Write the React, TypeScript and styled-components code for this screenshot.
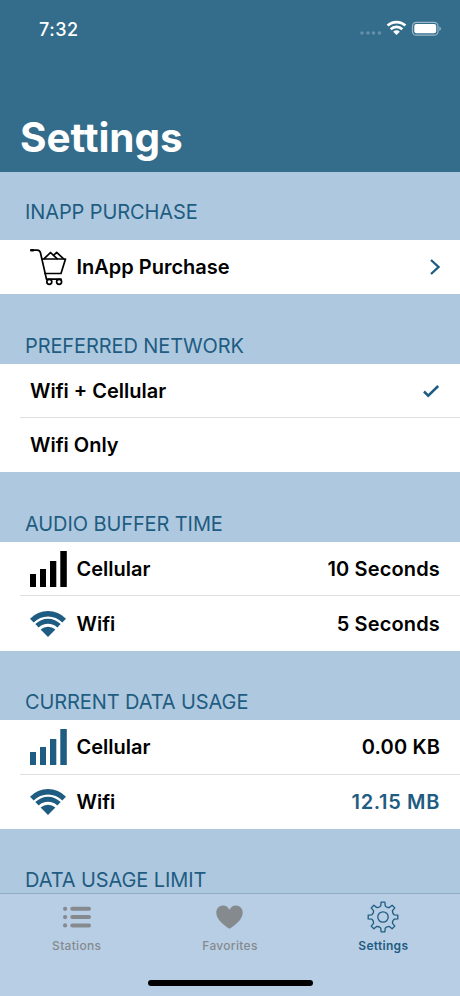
import React from 'react';
import styled, { createGlobalStyle } from 'styled-components';

const ink = '#1f5c82';

const GlobalStyle = createGlobalStyle`
  * { box-sizing: border-box; }
  html, body { margin: 0; padding: 0; background: #aec9df; overflow: hidden; }
  svg { display: block; flex: none; }
`;

const Screen = styled.div`
  width: 460px;
  height: 996px;
  overflow: hidden;
  display: flex;
  flex-direction: column;
  background: #aec9df;
  color: #000;
  font-family: Inter, "Liberation Sans", sans-serif;
`;

const Header = styled.header`
  height: 172px;
  flex: none;
  display: flex;
  flex-direction: column;
  justify-content: space-between;
  background: #346c8b;
  color: #fff;
`;

const StatusBar = styled.div`
  height: 58px;
  padding: 0 19px 0 39px;
  display: flex;
  align-items: center;
  justify-content: space-between;
`;

const Clock = styled.span`
  font-size: 18px;
  font-weight: 500;
  letter-spacing: 0.5px;
`;

const Title = styled.h1`
  margin: 0;
  padding: 0 20px 9px;
  font-size: 40.5px;
  line-height: 50px;
  font-weight: 700;
  letter-spacing: -0.1px;
`;

const Content = styled.main`
  height: 721px;
  flex: none;
  overflow: hidden;
`;

const SectionTitle = styled.h2<{ $first?: boolean }>`
  margin: 0;
  height: ${p => (p.$first ? 68 : 69.6)}px;
  padding: ${p => (p.$first ? 27 : 38.5)}px 25px 0;
  font-size: 20px;
  line-height: 26px;
  font-weight: 400;
  letter-spacing: -0.1px;
  color: ${ink};
`;

const Row = styled.div`
  height: 54.3px;
  padding: 0 20px 0 30px;
  display: flex;
  align-items: center;
  background: #fff;
  font-size: 20px;
  font-weight: 600;
  letter-spacing: 0;
`;

const Divider = styled.div`
  height: 1px;
  margin: -1px 0 0 20px;
  position: relative;
  background: #dfdfe1;
`;

const IconSlot = styled.span`
  width: 46.5px;
  flex: none;
`;

const Label = styled.span`
  flex: 1;
`;

const Value = styled.span<{ $accent?: boolean }>`
  color: ${p => (p.$accent ? ink : '#000')};
  letter-spacing: ${p => (p.$accent ? 0.65 : 0.15)}px;
`;

const TabBar = styled.nav`
  height: 103px;
  flex: none;
  border-top: 1px solid #8fadc3;
  background: #b8cee4;
  display: flex;
  flex-direction: column;
  justify-content: space-between;
  align-items: center;
`;

const Tabs = styled.div`
  width: 100%;
  display: grid;
  grid-template-columns: repeat(3, 1fr);
`;

const Tab = styled.div<{ $active?: boolean }>`
  display: flex;
  flex-direction: column;
  align-items: center;
  padding-top: 7px;
  color: ${p => (p.$active ? ink : '#858a8e')};
  font-size: 12px;
  line-height: 16px;
  font-weight: ${p => (p.$active ? 600 : 500)};
  letter-spacing: 0.3px;
`;

const TabIcon = styled.span`
  height: 37px;
`;

const HomeIndicator = styled.div`
  width: 165px;
  height: 6px;
  margin-bottom: 10px;
  border-radius: 3px;
  background: #000;
`;

const StatusIcons = () => (
  <svg width="82" height="20" viewBox="0 0 82 20">
    <g fill="#6590a8">
      <circle cx="3" cy="14" r="1.8" />
      <circle cx="9" cy="14" r="1.8" />
      <circle cx="14.5" cy="14" r="1.8" />
      <circle cx="20.5" cy="14" r="1.8" />
    </g>
    <g fill="none" stroke="#fff" strokeWidth="2.7">
      <path d="M28.6 6.6a13 13 0 0 1 17.8 0" />
      <path d="M31.7 10.3a8.3 8.3 0 0 1 11.6 0" />
    </g>
    <path d="M34.2 12.7a4.6 4.6 0 0 1 6.6 0L37.5 16z" fill="#fff" />
    <rect x="53.5" y="3.3" width="25.5" height="12.8" rx="3.7" fill="none" stroke="#9ab7c7" strokeWidth="1.2" />
    <rect x="55.3" y="5.1" width="21.9" height="9.2" rx="2" fill="#fff" />
    <path d="M80.4 7.5c2 .8 2 3.6 0 4.4z" fill="#9ab7c7" />
  </svg>
);

const CartIcon = () => (
  <svg width="38" height="38" viewBox="0 0 38 38" fill="none" stroke="#000" strokeWidth="1.7" strokeLinecap="round" strokeLinejoin="round">
    <path d="M1.2 2.2H6.5q3 -.4 3.9 2.3L16.5 31.2H31" />
    <path d="M1.2 2.2H3" strokeWidth="2.4" />
    <path d="M12.3 11H35.5L31 25.5H15.2" />
    <path d="M14.2 10.7L20.5 4.5l6.5 6.2M23.5 7.3L26.7 4.4 33.4 10.7" />
    <circle cx="19.3" cy="33.8" r="2.5" />
    <circle cx="29.1" cy="33.8" r="2.5" />
  </svg>
);

const SignalIcon = ({ color }: { color: string }) => (
  <svg width="38" height="36" viewBox="0 0 38 36" fill={color}>
    <path d="M0 23h6v13H0zM10 18h6v18h-6zM20 10h6.3v26H20zM30.3 0h6.5v36h-6.5z" />
  </svg>
);

const WifiIcon = () => (
  <svg width="37" height="28" viewBox="0 0 37 28" fill={ink}>
    <path d="M0 8.7A25 25 0 0 1 36 8.7L32.3 12.5A20 20 0 0 0 3.7 12.5z" />
    <path d="M5.3 14.1A18 18 0 0 1 30.7 14.1L27.3 17.5A13.5 13.5 0 0 0 8.7 17.5z" />
    <path d="M10.6 19.4A11.5 11.5 0 0 1 25.4 19.4L18 27z" />
  </svg>
);

const ListIcon = () => (
  <svg width="28" height="31" viewBox="0 0 28 31" fill="currentColor">
    {[7.8, 16.1, 24.4].map(y => (
      <g key={y}>
        <circle cx="2.1" cy={y} r="2.1" />
        <rect x="7.3" y={y - 2} width="20.7" height="4" rx="2" />
      </g>
    ))}
  </svg>
);

const HeartIcon = () => (
  <svg width="27" height="31" viewBox="0 0 27 31" fill="currentColor">
    <path d="M13.5 27.7C9.5 25.3.3 19.1.3 11.7.3 7.5 3.3 4.6 7 4.6c2.900 0 5.200 1.500 6.500 4.200 1.300-2.700 3.600-4.200 6.500-4.200 3.700 0 6.700 2.900 6.700 7.100 0 7.400-9.200 13.600-13.200 16z" />
  </svg>
);

const rotate = (x: number, y: number, turn: number) => {
  const a = (turn * Math.PI) / 4;
  return `${(x * Math.cos(a) - y * Math.sin(a)).toFixed(2)} ${(x * Math.sin(a) + y * Math.cos(a)).toFixed(2)}`;
};

const gearPath =
  Array.from({ length: 8 }, (_, i) => {
    const p = (x: number, y: number) => rotate(x, y, i);
    return `${i ? 'L' : 'M'}${p(-3.2, -10.3)}L${p(-2.2, -11.2)}L${p(-1.9, -14.8)}L${p(1.9, -14.8)}L${p(2.2, -11.2)}L${p(3.2, -10.3)}Q${p(3.9, -9.8)} ${p(5, -9.5)}`;
  }).join('') + 'Z';

const GearIcon = () => (
  <svg width="32" height="32" viewBox="-16 -16 32 32" fill="none" stroke="currentColor" strokeWidth="1.3" strokeLinejoin="round">
    <path d={gearPath} />
    <circle r="5.2" />
  </svg>
);

const Chevron = () => (
  <svg width="10" height="16" viewBox="0 0 10 16" fill="none" stroke={ink} strokeWidth="2.3">
    <path d="M1 1l7.5 7L1 15" />
  </svg>
);

const Check = () => (
  <svg width="17" height="14" viewBox="0 0 17 14" fill="none" stroke={ink} strokeWidth="2.5">
    <path d="M1 7.5l4.2 4.2L15.2 2" />
  </svg>
);

export default function App() {
  return (
    <>
      <GlobalStyle />
      <Screen>
        <Header>
          <StatusBar>
            <Clock>7:32</Clock>
            <StatusIcons />
          </StatusBar>
          <Title>Settings</Title>
        </Header>
        <Content>
          <SectionTitle $first>INAPP PURCHASE</SectionTitle>
          <Row>
            <IconSlot><CartIcon /></IconSlot>
            <Label>InApp Purchase</Label>
            <Chevron />
          </Row>
          <SectionTitle>PREFERRED NETWORK</SectionTitle>
          <Row>
            <Label>Wifi + Cellular</Label>
            <Check />
          </Row>
          <Divider />
          <Row>
            <Label>Wifi Only</Label>
          </Row>
          <SectionTitle>AUDIO BUFFER TIME</SectionTitle>
          <Row>
            <IconSlot><SignalIcon color="#000" /></IconSlot>
            <Label>Cellular</Label>
            <Value>10 Seconds</Value>
          </Row>
          <Divider />
          <Row>
            <IconSlot><WifiIcon /></IconSlot>
            <Label>Wifi</Label>
            <Value>5 Seconds</Value>
          </Row>
          <SectionTitle>CURRENT DATA USAGE</SectionTitle>
          <Row>
            <IconSlot><SignalIcon color={ink} /></IconSlot>
            <Label>Cellular</Label>
            <Value>0.00 KB</Value>
          </Row>
          <Divider />
          <Row>
            <IconSlot><WifiIcon /></IconSlot>
            <Label>Wifi</Label>
            <Value $accent>12.15 MB</Value>
          </Row>
          <SectionTitle>DATA USAGE LIMIT</SectionTitle>
        </Content>
        <TabBar>
          <Tabs>
            <Tab><TabIcon><ListIcon /></TabIcon>Stations</Tab>
            <Tab><TabIcon><HeartIcon /></TabIcon>Favorites</Tab>
            <Tab $active><TabIcon><GearIcon /></TabIcon>Settings</Tab>
          </Tabs>
          <HomeIndicator />
        </TabBar>
      </Screen>
    </>
  );
}
